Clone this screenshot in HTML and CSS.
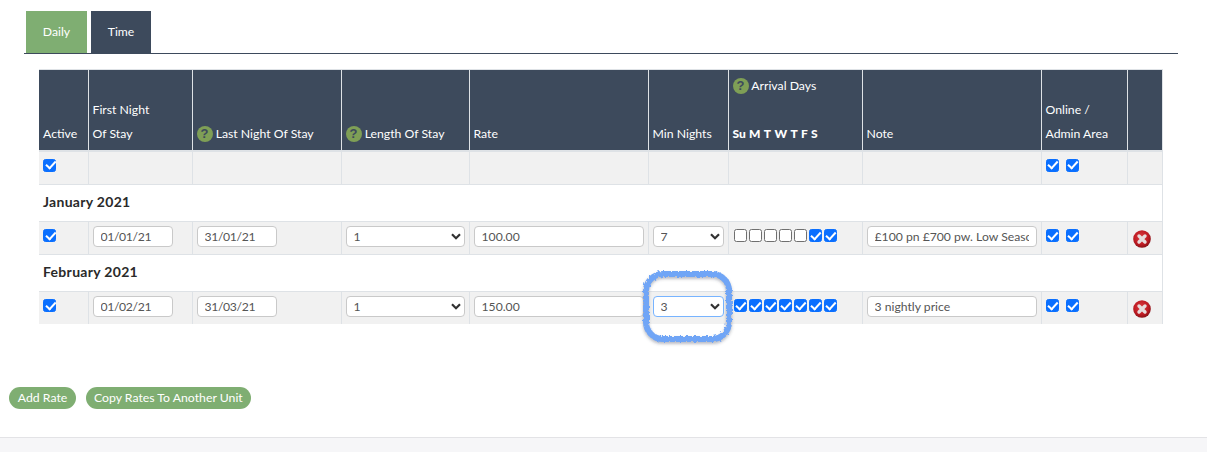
FILE: index.html
```html
<!DOCTYPE html>
<html lang="en">
<head>
<meta charset="utf-8">
<title>Rates</title>
<link rel="stylesheet" href="styles.css">
</head>
<body>
<main class="page">
  <nav class="tabs">
    <a class="tab tab-active">Daily</a>
    <a class="tab">Time</a>
  </nav>
  <table class="rates">
    <colgroup>
      <col class="c1"><col class="c2"><col class="c3"><col class="c4"><col class="c5"><col class="c6"><col class="c7"><col class="c8"><col class="c9"><col class="c10">
    </colgroup>
    <thead>
      <tr>
        <th>Active</th>
        <th>First Night<br>Of Stay</th>
        <th><span class="help">?</span> Last Night Of Stay</th>
        <th><span class="help">?</span> Length Of Stay</th>
        <th>Rate</th>
        <th>Min Nights</th>
        <th><div class="arrival"><span class="help">?</span> Arrival Days</div><div class="days"><b>Su</b><b>M</b><b>T</b><b>W</b><b>T</b><b>F</b><b>S</b></div></th>
        <th>Note</th>
        <th>Online /<br>Admin Area</th>
        <th></th>
      </tr>
    </thead>
    <tbody>
      <tr class="row row-filter">
        <td><input class="check" type="checkbox" checked></td>
        <td></td><td></td><td></td><td></td><td></td><td></td><td></td>
        <td><div class="pair"><input class="check" type="checkbox" checked><input class="check" type="checkbox" checked></div></td>
        <td></td>
      </tr>
      <tr class="month"><td colspan="10">January 2021</td></tr>
      <tr class="row">
        <td><input class="check" type="checkbox" checked></td>
        <td><input class="field date" value="01/01/21"></td>
        <td><input class="field date" value="31/01/21"></td>
        <td><select class="field pick"><option>1</option></select></td>
        <td><input class="field wide" value="100.00"></td>
        <td><select class="field pick"><option>7</option></select></td>
        <td><div class="daychecks"><input class="check" type="checkbox"><input class="check" type="checkbox"><input class="check" type="checkbox"><input class="check" type="checkbox"><input class="check" type="checkbox"><input class="check" type="checkbox" checked><input class="check" type="checkbox" checked></div></td>
        <td><input class="field wide" value="£100 pn £700 pw. Low Season"></td>
        <td><div class="pair"><input class="check" type="checkbox" checked><input class="check" type="checkbox" checked></div></td>
        <td><svg class="del" viewBox="0 0 18 18"><use href="#del-icon"/></svg></td>
      </tr>
      <tr class="month"><td colspan="10">February 2021</td></tr>
      <tr class="row">
        <td><input class="check" type="checkbox" checked></td>
        <td><input class="field date" value="01/02/21"></td>
        <td><input class="field date" value="31/03/21"></td>
        <td><select class="field pick"><option>1</option></select></td>
        <td><input class="field wide" value="150.00"></td>
        <td><select class="field pick pick-focus"><option>3</option></select></td>
        <td><div class="daychecks"><input class="check" type="checkbox" checked><input class="check" type="checkbox" checked><input class="check" type="checkbox" checked><input class="check" type="checkbox" checked><input class="check" type="checkbox" checked><input class="check" type="checkbox" checked><input class="check" type="checkbox" checked></div></td>
        <td><input class="field wide" value="3 nightly price"></td>
        <td><div class="pair"><input class="check" type="checkbox" checked><input class="check" type="checkbox" checked></div></td>
        <td><svg class="del" viewBox="0 0 18 18"><use href="#del-icon"/></svg></td>
      </tr>
    </tbody>
  </table>
  <div class="actions">
    <button class="pill pill-add">Add Rate</button>
    <button class="pill">Copy Rates To Another Unit</button>
  </div>
</main>
<footer class="foot"></footer>

<svg class="ring" viewBox="0 0 104 86" width="104" height="86">
  <defs>
    <filter id="rough" x="-20%" y="-20%" width="140%" height="140%">
      <feTurbulence type="fractalNoise" baseFrequency="0.35" numOctaves="2" seed="4"/>
      <feDisplacementMap in="SourceGraphic" scale="4"/>
    </filter>
    <filter id="soft" x="-20%" y="-20%" width="140%" height="140%">
      <feGaussianBlur stdDeviation="1.6"/>
    </filter>
  </defs>
  <rect class="ring-shadow" x="9" y="11" width="83" height="65" rx="17" filter="url(#soft)"/>
  <rect class="ring-line" x="9" y="9" width="83" height="65" rx="17" filter="url(#rough)"/>
</svg>

<svg class="defs" width="0" height="0">
  <defs>
    <radialGradient id="del-grad" cx="45%" cy="40%" r="60%">
      <stop offset="0" stop-color="#dd3a40"/>
      <stop offset="0.7" stop-color="#bd1a22"/>
      <stop offset="1" stop-color="#861218"/>
    </radialGradient>
    <g id="del-icon">
      <circle cx="9" cy="9" r="8.8" fill="url(#del-grad)"/>
      <path d="M6 6L12 12M12 6L6 12" stroke="#e6dcdc" stroke-width="3.4" stroke-linecap="round"/>
    </g>
  </defs>
</svg>
</body>
</html>
```
FILE: styles.css
```css
* { box-sizing: border-box; }
html, body { margin: 0; padding: 0; }
body {
  position: relative;
  height: 452px;
  overflow: hidden;
  background: #fff;
  font-family: Lato, "Open Sans", sans-serif;
  font-size: 12px;
  color: #444;
  display: flex;
  flex-direction: column;
}
.page { flex: 1; padding: 11px 0 0 0; }

.tabs {
  display: flex;
  gap: 4px;
  margin: 0 29px 0 24px;
  padding-left: 2px;
  border-bottom: 1px solid #3d4a5c;
  height: 43px;
}
.tab {
  width: 60px;
  height: 42px;
  line-height: 41px;
  text-align: center;
  background: #3d4a5c;
  color: #fff;
  font-size: 12.2px;
}
.tab-active { width: 61px; background: #7fae72; }

.rates {
  table-layout: fixed;
  border-collapse: collapse;
  width: 1123px;
  margin: 15px 0 0 39px;
}
.c1 { width: 49px; }
.c2 { width: 104px; }
.c3 { width: 149px; }
.c4 { width: 128px; }
.c5 { width: 179px; }
.c6 { width: 80px; }
.c7 { width: 134px; }
.c8 { width: 179px; }
.c9 { width: 86px; }
.c10 { width: 35px; }

.rates th {
  height: 81px;
  padding: 2px 4px 4px;
  background: #3d4a5c;
  color: #fff;
  font-weight: 400;
  font-size: 12.25px;
  line-height: 24px;
  text-align: left;
  vertical-align: bottom;
  border: 1px solid #dee2e6;
  border-bottom-width: 2px;
}
.rates th:first-child { border-left: 0; }
.help {
  display: inline-block;
  width: 16px;
  height: 16px;
  border-radius: 50%;
  background: #7f9f56;
  color: #3d4a5c;
  font: 700 13px/16px "Liberation Sans", sans-serif;
  text-align: center;
  vertical-align: 0;
}
.arrival { margin-bottom: 24px; }
.days { display: flex; gap: 3.3px; font-size: 12px; }
.days b { font-weight: 900; }

.row td {
  height: 33px;
  padding: 4px;
  background: #f1f1f1;
  vertical-align: top;
  border: 1px solid #dee2e6;
}
.row td:first-child { border-left: 0; }
.row-filter td { height: 34px; }
.row:last-child td { border-bottom: 0; height: 32px; }
.month td {
  height: 37px;
  padding: 0 4px 4px;
  font-weight: 700;
  font-size: 14px;
  color: #2a2a2a;
  letter-spacing: 0.3px;
  border-right: 1px solid #dee2e6;
  background: #fff;
}

.check {
  appearance: none;
  display: block;
  position: relative;
  width: 13px;
  height: 13px;
  margin: 3px 0 0;
  border: 1px solid #6f6f6f;
  border-radius: 2.5px;
  background: #fff;
}
.check:checked { background: #0a6fff; border-color: #0a6fff; }
.check:checked::after {
  content: "";
  position: absolute;
  left: 1.6px;
  top: 1.6px;
  width: 7.6px;
  height: 4.2px;
  border-left: 2px solid #fff;
  border-bottom: 2px solid #fff;
  transform: rotate(-48deg);
}
.pair { display: flex; gap: 7px; }
.daychecks { display: flex; gap: 2px; margin-left: 1px; }

.field {
  display: block;
  height: 21px;
  border: 1px solid #c9c9c9;
  border-radius: 4px;
  background: #fff;
  color: #555;
  font-family: Lato, "Open Sans", sans-serif;
  font-size: 12.2px;
  padding: 0 7px;
  margin: 0;
  outline: none;
}
.date { width: 80px; letter-spacing: -0.35px; }
.wide { width: 170px; }
.pick {
  appearance: none;
  width: 100%;
  background: #fff url("data:image/svg+xml,%3Csvg xmlns='http://www.w3.org/2000/svg' width='10' height='7'%3E%3Cpath d='M1 1.3L5 5.3L9 1.3' fill='none' stroke='%23333' stroke-width='2.2'/%3E%3C/svg%3E") no-repeat right 3px center;
}
.pick-focus { border-color: #78b4ff; }
.del { display: block; width: 18px; height: 18px; margin: 4px 0 0 1px; }

.actions {
  display: flex;
  gap: 10px;
  margin: 63px 0 0 9px;
}
.pill {
  height: 22px;
  padding: 0 8px;
  border: 0;
  border-radius: 11px;
  background: #7fae72;
  color: #fff;
  font-family: Lato, "Open Sans", sans-serif;
  font-size: 12.25px;
  line-height: 22px;
}
.pill-add { width: 67px; padding: 0; }
.foot {
  height: 15px;
  background: #f6f6f8;
  border-top: 1px solid #e3e3e6;
  flex: none;
}
.ring {
  position: absolute;
  left: 637px;
  top: 265px;
  pointer-events: none;
}
.ring-line { fill: none; stroke: #70a5f6; stroke-width: 6; }
.ring-shadow { fill: none; stroke: rgba(60, 70, 90, .35); stroke-width: 6; }
.defs { position: absolute; }
```
